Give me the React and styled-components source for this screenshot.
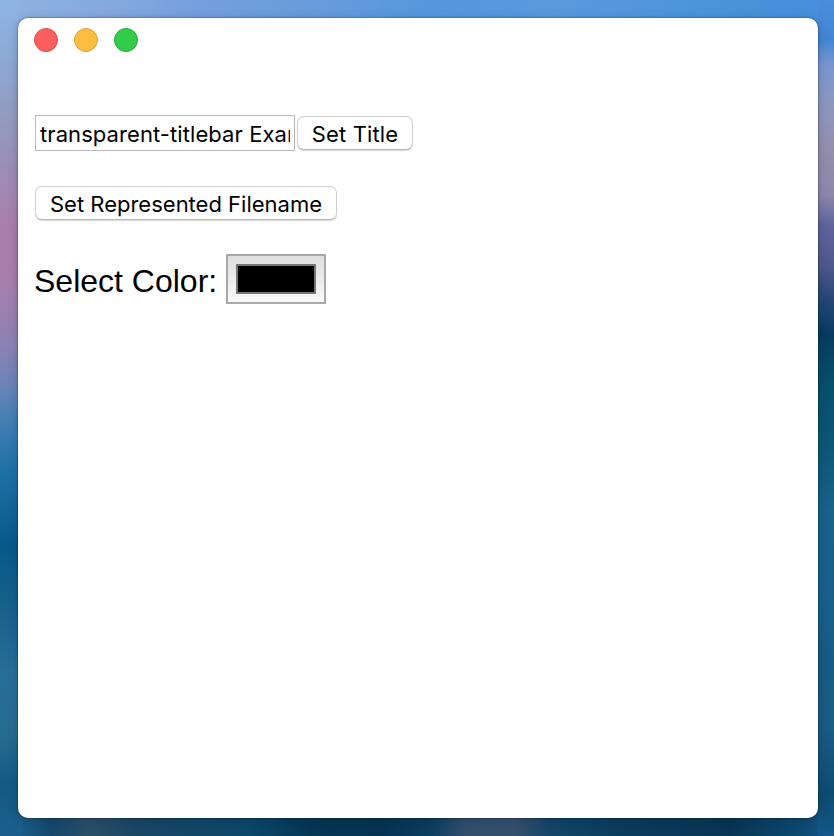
import React, { useState } from "react";
import styled, { createGlobalStyle } from "styled-components";

const GlobalStyle = createGlobalStyle`
  * { box-sizing: border-box; }
  body { margin: 0; overflow: hidden; }
`;

const Desktop = styled.main`
  width: 834px;
  height: 836px;
  padding: 18px 16px 18px 18px;
  background-color: #0b4468;
  background-repeat: no-repeat;
  background-position: 0 0, 100% 0, 0 0, 0 100%;
  background-size: 18px 836px, 16px 836px, 834px 30px, 834px 30px;
  background-image:
    linear-gradient(180deg, #8eb4e4 0, #8dabd9 50px, #929dc2 110px, #9b8fb7 165px, #ab7fab 225px, #a77fad 285px, #8d82b5 345px, #6685b9 390px, #3e7eb3 425px, #1d70a7 475px, #07598a 545px, #15608b 600px, #276f99 675px, #286b91 735px, #125b85 785px, #1b5e8e 836px),
    linear-gradient(180deg, #488edb 0, #4286d6 40px, #7a96cf 65px, #8c98c3 100px, #958fac 150px, #8d87aa 195px, #5e659d 225px, #50588d 265px, #244776 300px, #073b60 335px, #08506d 385px, #0c5777 445px, #19628a 510px, #19618c 580px, #175c84 660px, #1b5c85 725px, #0d4c72 795px, #145687 836px),
    linear-gradient(90deg, #94b5e3 0, #8eb1e2 20px, #84a9df 110px, #739fdd 210px, #649bdc 340px, #5398dd 440px, #5a9adc 560px, #4b94dc 700px, #488edb 834px),
    linear-gradient(90deg, #17608f 0, #1b5e8a 20px, #16486b 50px, #294e69 90px, #194663 140px, #0b4769 250px, #043754 310px, #043451 380px, #0b3d5e 430px, #304f6c 465px, #35506e 515px, #124567 550px, #0a3c5c 620px, #073653 730px, #0c486f 795px, #145687 834px);
`;

const Window = styled.section`
  width: 800px;
  height: 800px;
  border-radius: 10px;
  background: #fff;
  box-shadow: 0 0 2px rgba(0, 15, 40, 0.65), 0 2px 12px rgba(0, 15, 40, 0.2);
`;

const TitleBar = styled.header`
  display: flex;
  gap: 16px;
  height: 44px;
  padding: 10px 16px;
`;

const WindowControl = styled.button`
  width: 24px;
  height: 24px;
  padding: 0;
  border: 1px solid ${({ $edge }) => $edge};
  border-radius: 50%;
  background: ${({ $color }) => $color};
`;

const Content = styled.div`
  padding: 53px 17px 0;
`;

const TitleForm = styled.div`
  display: flex;
  align-items: flex-start;
  gap: 2px;
`;

const TitleInput = styled.input`
  width: 260px;
  height: 36px;
  padding: 2px 4px 0;
  border: 1px solid #b9b9b9;
  border-radius: 0;
  outline: none;
  background: #fff;
  color: #000;
  font: 22px Inter, sans-serif;
  letter-spacing: 0.08px;
`;

const PushButton = styled.button`
  display: block;
  width: ${({ $width }) => $width}px;
  height: 34px;
  margin-top: 1px;
  padding: 1px 0 0;
  border: 1px solid #d0d0d0;
  border-bottom-color: #b9b9b9;
  border-radius: 7px;
  background: #fff;
  box-shadow: 0 1px 1px rgba(0, 0, 0, 0.16);
  color: #000;
  font: 22px Inter, sans-serif;
  letter-spacing: ${({ $tracking = 0 }) => $tracking}px;
  white-space: nowrap;
`;

const FilenameRow = styled.div`
  padding-top: 34px;
`;

const ColorRow = styled.label`
  display: flex;
  align-items: center;
  width: max-content;
  margin-top: 34px;
  color: #000;
  font: 32px/50px "Liberation Sans", Arial, sans-serif;
`;

const ColorLabel = styled.span`
  width: 192px;
  height: 50px;
  margin-left: -1px;
  padding-top: 2px;
  white-space: nowrap;
`;

const ColorInput = styled.input`
  appearance: none;
  width: 100px;
  height: 50px;
  margin: 0;
  padding: 8px;
  border: 2px solid #a9a9a9;
  border-radius: 0;
  background: linear-gradient(#dfdfdf, #f8f8f8);

  &::-webkit-color-swatch-wrapper { padding: 0; }
  &::-webkit-color-swatch {
    border: 2px solid #777;
    border-radius: 0;
  }
`;

const controls = [
  { label: "Close", color: "#fd605c", edge: "#e24a47" },
  { label: "Minimize", color: "#fdbd41", edge: "#dfa034" },
  { label: "Zoom", color: "#34ca4a", edge: "#24ac37" },
];

export default function App() {
  const [title, setTitle] = useState("transparent-titlebar Example");
  const [color, setColor] = useState("#000000");

  return (
    <>
      <GlobalStyle />
      <Desktop>
        <Window>
          <TitleBar>
            {controls.map((control) => (
              <WindowControl
                key={control.label}
                aria-label={control.label}
                $color={control.color}
                $edge={control.edge}
              />
            ))}
          </TitleBar>
          <Content>
            <TitleForm>
              <TitleInput
                aria-label="Title"
                value={title}
                onChange={(event) => setTitle(event.target.value)}
              />
              <PushButton $width={116} $tracking={0.12}>Set Title</PushButton>
            </TitleForm>
            <FilenameRow>
              <PushButton $width={302}>Set Represented Filename</PushButton>
            </FilenameRow>
            <ColorRow>
              <ColorLabel>Select Color:</ColorLabel>
              <ColorInput
                type="color"
                value={color}
                onChange={(event) => setColor(event.target.value)}
              />
            </ColorRow>
          </Content>
        </Window>
      </Desktop>
    </>
  );
}
